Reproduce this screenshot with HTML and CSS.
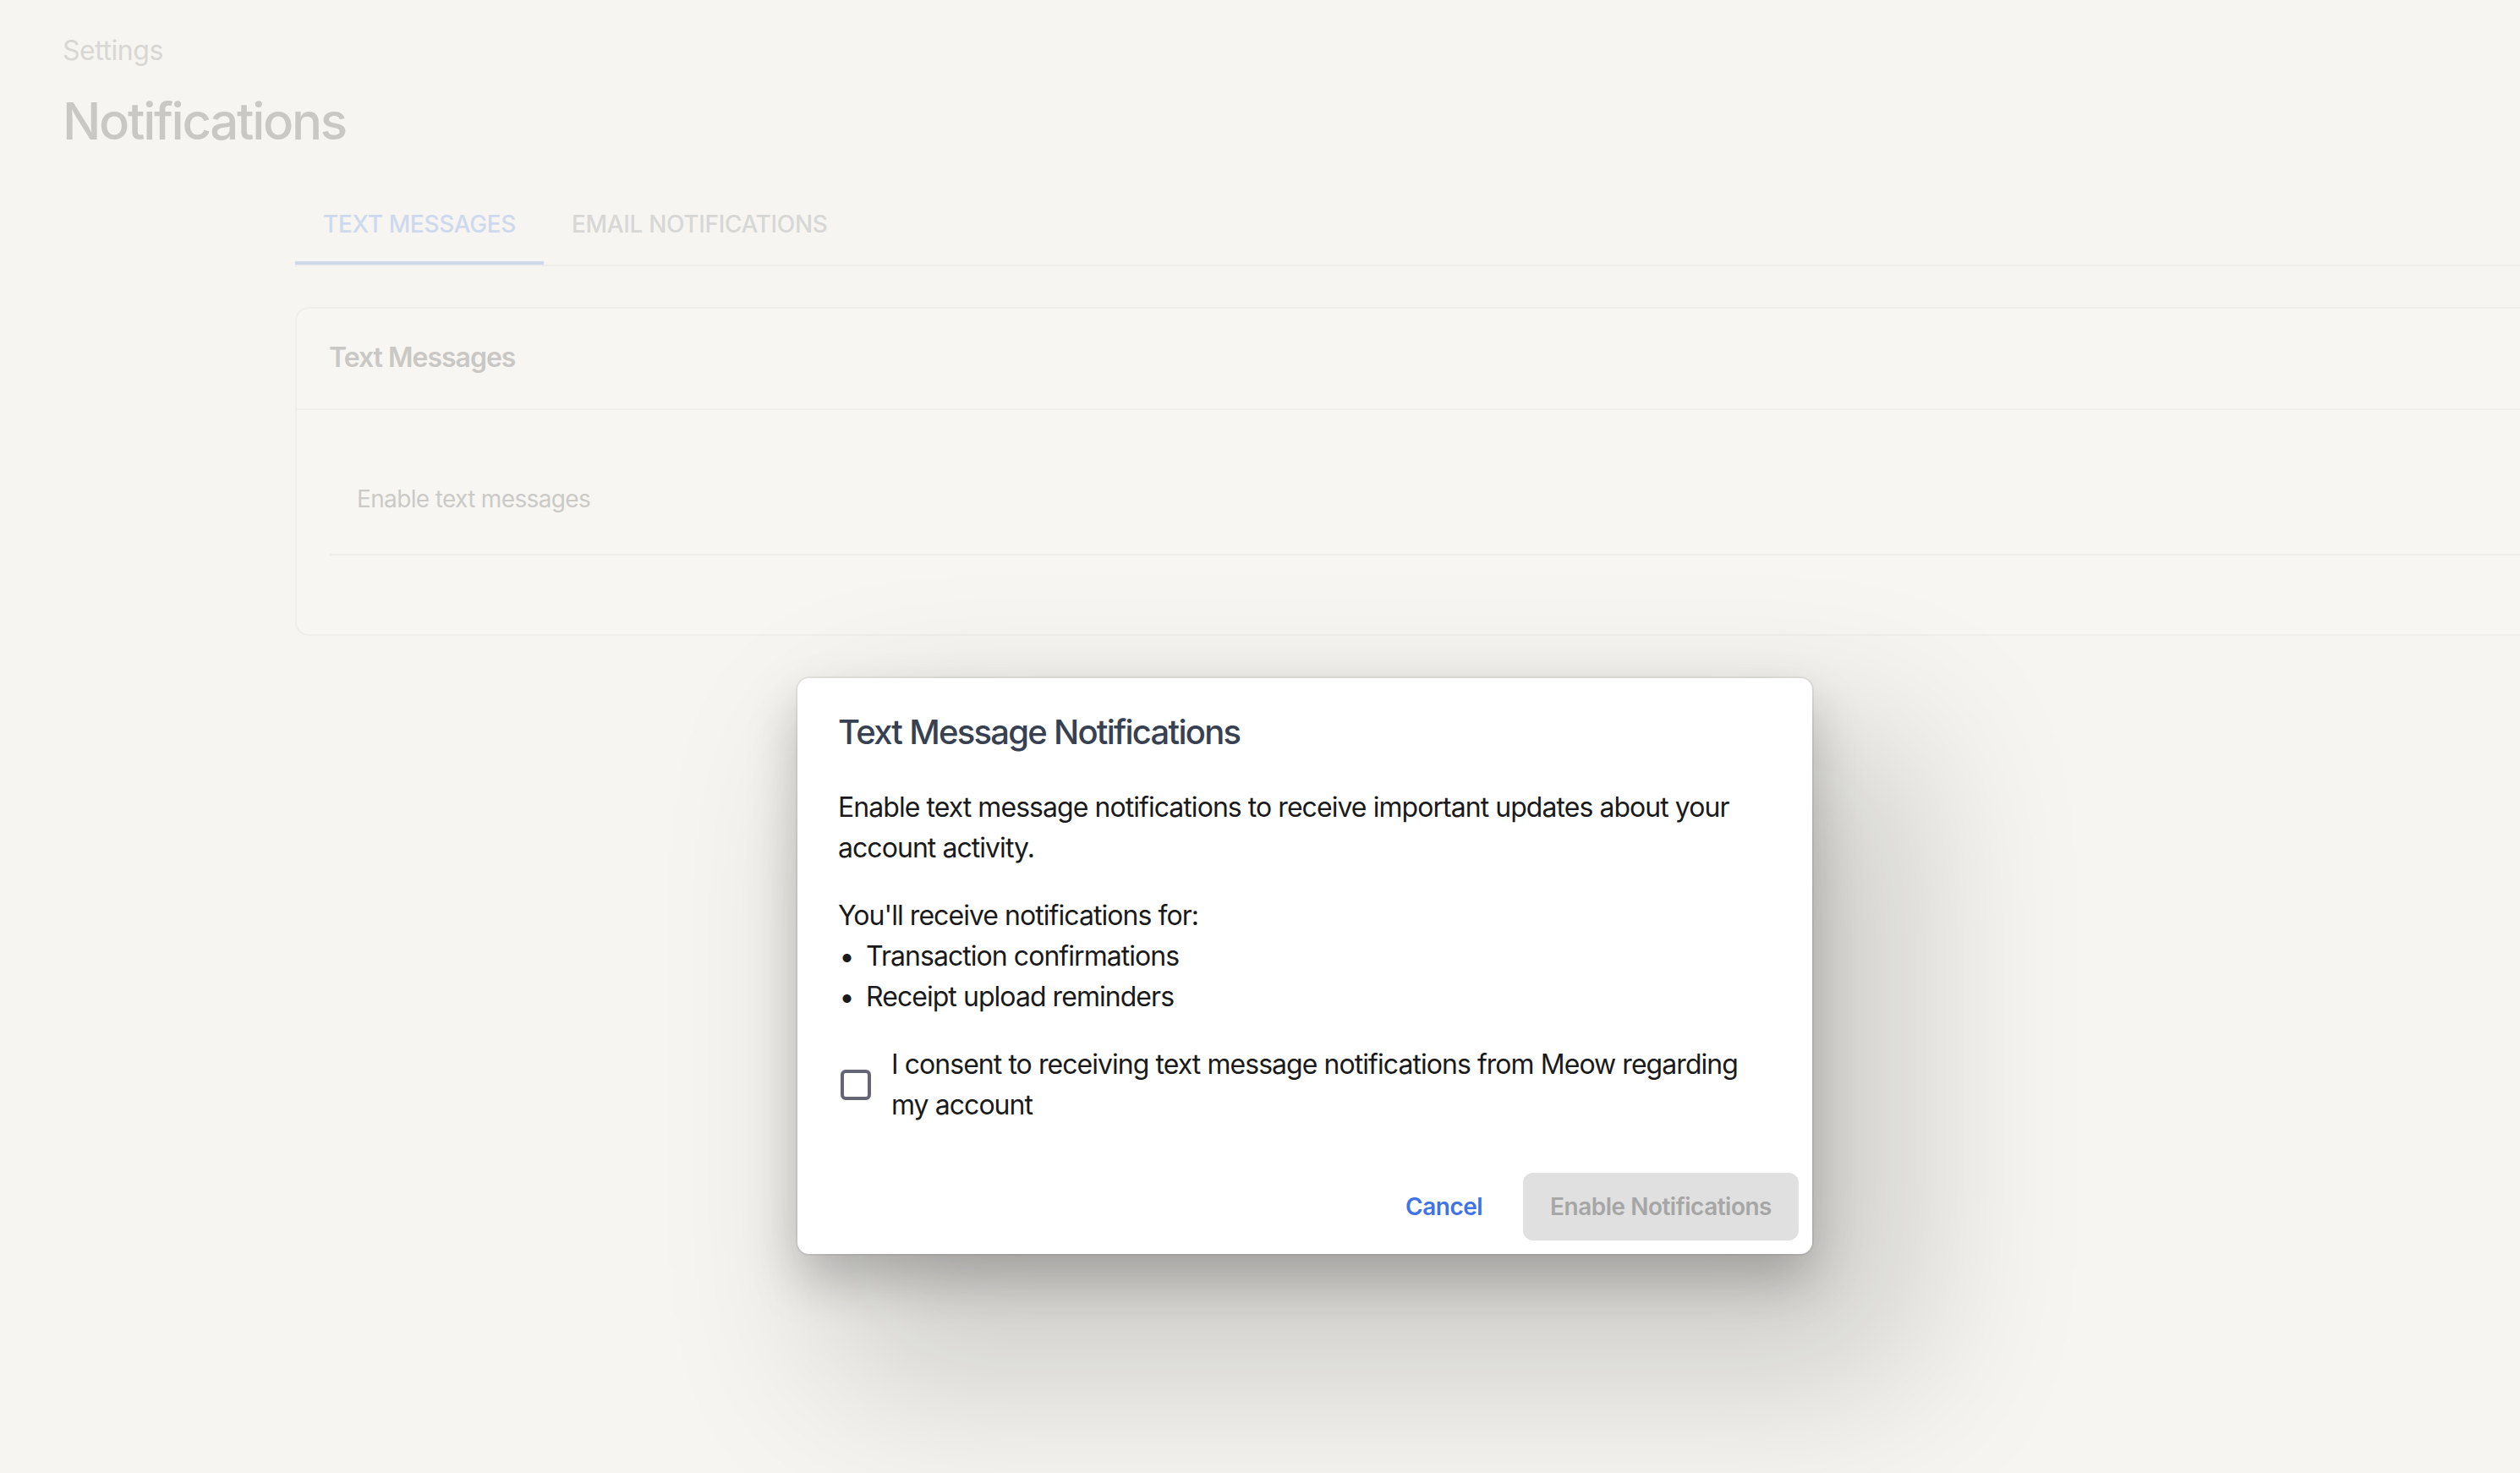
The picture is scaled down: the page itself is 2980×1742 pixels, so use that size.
FILE: index.html
```html
<!DOCTYPE html>
<html lang="en">
<head>
    <meta charset="UTF-8">
    <meta name="viewport" content="width=device-width, initial-scale=1.0">
    <title>Notifications</title>
    <link rel="stylesheet" href="styles.css">
</head>
<body>
    <div class="page">
        <div class="header">
            <div class="crumb">Settings</div>
            <h1>Notifications</h1>
        </div>
        <div class="main">
            <div class="tabs">
                <div class="tab active">Text messages</div>
                <div class="tab">Email notifications</div>
            </div>
            <div class="card">
                <div class="card-header">Text Messages</div>
                <div class="card-body">
                    <div class="row">Enable text messages</div>
                </div>
            </div>
        </div>
    </div>

    <div class="dialog">
        <h2 class="dialog-title">Text Message Notifications</h2>
        <div class="dialog-content">
            <p>Enable text message notifications to receive important updates about your account activity.</p>
            <div class="for">You'll receive notifications for:</div>
            <ul class="bullets">
                <li>Transaction confirmations</li>
                <li>Receipt upload reminders</li>
            </ul>
            <label class="consent">
                <span class="box"></span>
                <span>I consent to receiving text message notifications from Meow regarding my account</span>
            </label>
        </div>
        <div class="dialog-actions">
            <button class="btn-cancel">Cancel</button>
            <button class="btn-enable" disabled>Enable Notifications</button>
        </div>
    </div>
</body>
</html>
```

FILE: styles.css
```css
body {
    margin: 0;
    width: 2980px;
    height: 1742px;
    overflow: hidden;
    background-color: #f6f5f1;
    font-family: Inter, "Noto Sans", sans-serif;
}

/* faded page behind the dialog */
.header {
    padding: 36px 0 0 74px;
}
.crumb {
    font-size: 32px;
    line-height: 48px;
    letter-spacing: -0.45px;
    color: #d8d7d4;
}
h1 {
    margin: 23px 0 0;
    font-size: 60px;
    line-height: 72px;
    font-weight: 500;
    letter-spacing: -2.3px;
    color: #c9c8c5;
}
.main {
    margin: 41px 0 0 349px;
    width: 2800px;
}
.tabs {
    display: flex;
    border-bottom: 2px solid #eeede9;
}
.tab {
    height: 89px;
    padding: 0 33px;
    display: flex;
    align-items: center;
    font-size: 28px;
    font-weight: 500;
    letter-spacing: -0.35px;
    text-transform: uppercase;
    color: #d7d7d5;
    border-bottom: 4px solid transparent;
}
.tab.active {
    color: #cfd9ee;
    border-bottom-color: #cfd8eb;
}
.card {
    margin-top: 48px;
    border: 2px solid #efeeea;
    border-radius: 16px;
    background: #f7f6f3;
}
.card-header {
    padding: 34px 38px 36px;
    font-size: 32px;
    line-height: 48px;
    font-weight: 600;
    letter-spacing: -1px;
    color: #c9c8c5;
    border-bottom: 2px solid #efeeea;
}
.card-body {
    padding: 37px 0 93px 39px;
}
.row {
    padding: 48px 32px 45px;
    font-size: 28px;
    line-height: 40px;
    letter-spacing: -0.65px;
    color: #cbcac7;
    border-bottom: 2px solid #efeeea;
}

/* dialog */
.dialog {
    position: absolute;
    left: 943px;
    top: 802px;
    width: 1200px;
    background: #fff;
    border-radius: 14px;
    box-shadow: 0 0 0 2px rgba(0,0,0,0.06),
                0 30px 60px rgba(0,0,0,0.22),
                80px 110px 200px 40px rgba(0,0,0,0.17);
}
.dialog-title {
    margin: 0;
    padding: 32px 48px 0;
    font-size: 40px;
    line-height: 64px;
    font-weight: 500;
    letter-spacing: -1.75px;
    color: #374151;
}
.dialog-content {
    padding: 33px 48px 40px;
    font-size: 32px;
    line-height: 48px;
    letter-spacing: -0.95px;
    color: #1a1a1c;
}
.dialog-content p {
    margin: 0 0 32px;
}
.bullets {
    margin: 0 0 32px;
    padding: 0;
    list-style: none;
}
.bullets li::before {
    content: "•";
    display: inline-block;
    width: 20px;
    margin-right: 13px;
    text-align: center;
}
.consent {
    display: flex;
    align-items: center;
    gap: 24px;
}
.box {
    flex: none;
    width: 28px;
    height: 28px;
    margin-left: 3px;
    border: 4px solid #646674;
    border-radius: 6px;
}
.dialog-actions {
    padding: 16px;
    display: flex;
    justify-content: flex-end;
    gap: 16px;
}
button {
    height: 80px;
    padding: 0 32px;
    border: none;
    border-radius: 12px;
    font-family: Inter, "Noto Sans", sans-serif;
    font-size: 28px;
    font-weight: 600;
    letter-spacing: -0.5px;
    background: none;
}
.btn-cancel {
    color: #3f73e6;
}
.btn-enable {
    background: #e0e0e0;
    color: #a6a6a6;
}
```
